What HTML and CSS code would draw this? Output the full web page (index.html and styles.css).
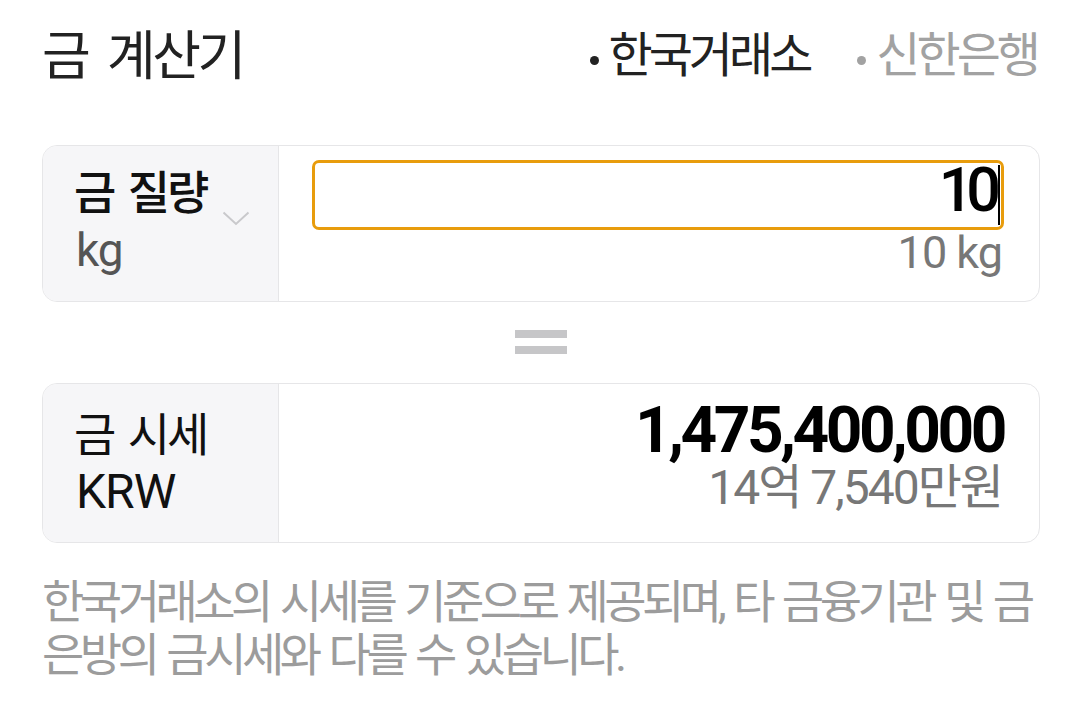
FILE: index.html
```html
<!DOCTYPE html>
<html lang="ko">

<head>
    <meta charset="UTF-8">
    <meta name="viewport" content="width=device-width, initial-scale=1.0">
    <title>금 계산기</title>
    <link rel="stylesheet" href="styles.css">
</head>

<body>

    <div class="page">
        <header class="top">
            <h1 class="title">금 계산기</h1>
            <nav class="tabs">
                <span class="tab tab-on"><i class="dot"></i>한국거래소</span>
                <span class="tab"><i class="dot"></i>신한은행</span>
            </nav>
        </header>

        <section class="card card-weight">
            <div class="card-label">
                <div class="label-row">
                    <span class="label-name">금 질량</span>
                    <svg class="chevron" width="28" height="15" viewBox="0 0 28 15">
                        <polyline points="1.5,1.5 14,13 26.5,1.5" fill="none" stroke="#c9c9cc" stroke-width="2" />
                    </svg>
                </div>
                <span class="label-unit">kg</span>
            </div>
            <div class="card-value">
                <div class="input-box">
                    <span class="input-text">10</span><span class="caret"></span>
                </div>
                <div class="sub">10 kg</div>
            </div>
        </section>

        <div class="equals"><span></span><span></span></div>

        <section class="card card-price">
            <div class="card-label">
                <span class="label-name name-light">금 시세</span>
                <span class="label-unit unit-dark">KRW</span>
            </div>
            <div class="card-value">
                <div class="amount">1,475,400,000</div>
                <div class="sub sub-price">14억 7,540만원</div>
            </div>
        </section>

        <p class="note">
            <span class="note-line">한국거래소의 시세를 기준으로 제공되며, 타 금융기관 및 금</span>
            <span class="note-line">은방의 금시세와 다를 수 있습니다.</span>
        </p>
    </div>

</body>

</html>
```

FILE: styles.css
```css
body {
    margin: 0;
    padding: 0;
    background: #ffffff;
    font-family: Roboto, "Noto Sans CJK KR", sans-serif;
    color: #111;
}

.page {
    width: 1080px;
    padding: 0 40px 0 42px;
    box-sizing: border-box;
}

/* header */
.top {
    height: 116px;
    display: flex;
    align-items: center;
    justify-content: space-between;
}

.title {
    margin: 0;
    font-size: 53px;
    font-weight: 400;
    letter-spacing: -3.5px;
    word-spacing: 10px;
    line-height: 1;
    color: #222;
    margin-top: -2px;
}

.tabs {
    display: flex;
    align-items: center;
    gap: 48px;
    margin-top: -4px;
    margin-right: 3px;
}

.tab {
    display: flex;
    align-items: center;
    font-size: 48px;
    letter-spacing: -4px;
    line-height: 1;
    color: #a2a2a2;
}

.tab-on {
    color: #222;
}

.dot {
    width: 9px;
    height: 9px;
    border-radius: 50%;
    background: currentColor;
    margin: 9px 10px 0 0;
}

/* cards */
.card {
    display: flex;
    border: 1px solid #e6e6e8;
    border-radius: 15px;
    overflow: hidden;
    box-sizing: border-box;
}

.card-weight {
    margin-top: 29px;
    height: 157px;
}

.card-price {
    height: 160px;
}

.card-label {
    width: 236px;
    flex-shrink: 0;
    background: #f6f6f8;
    border-right: 1px solid #e6e6e8;
    box-sizing: border-box;
    padding-left: 31px;
    display: flex;
    flex-direction: column;
    justify-content: center;
}

.label-row {
    display: flex;
    align-items: flex-end;
}

.label-name {
    font-size: 46px;
    font-weight: 500;
    letter-spacing: -3px;
    word-spacing: 6px;
    line-height: 58px;
    color: #111;
    margin-top: -6px;
}

.name-light {
    font-weight: 400;
    margin-top: 0;
}

.chevron {
    margin: 0 0 -4px 16px;
}

.label-unit {
    font-size: 46px;
    line-height: 56px;
    color: #555;
    letter-spacing: -1px;
    padding-left: 2px;
}

.unit-dark {
    color: #111;
    font-size: 48px;
}

.card-value {
    flex: 1;
    display: flex;
    flex-direction: column;
    align-items: flex-end;
    justify-content: flex-start;
    padding: 19px 35px 0 33px;
}

.card-weight .card-value {
    padding-top: 14px;
}

.input-box {
    width: 100%;
    height: 70px;
    box-sizing: border-box;
    border: 3px solid #e89c0c;
    border-radius: 7px;
    display: flex;
    align-items: center;
    justify-content: flex-end;
    padding-right: 1px;
}

.input-text {
    font-size: 61px;
    font-weight: 500;
    letter-spacing: -7px;
    line-height: 1;
    color: #000;
    margin-top: -10px;
}

.caret {
    width: 2px;
    height: 60px;
    background: #000;
    margin-left: 4px;
}

.sub {
    font-size: 45px;
    line-height: 1;
    letter-spacing: -1px;
    color: #777;
    margin: 0 2px 0 0;
}

.amount {
    font-size: 64px;
    font-weight: 700;
    letter-spacing: -3.5px;
    line-height: 56px;
    color: #000;
}

.sub-price {
    font-size: 48px;
    line-height: 48px;
    letter-spacing: -2px;
    margin-top: 5px;
}

/* equals sign */
.equals {
    display: flex;
    flex-direction: column;
    align-items: center;
    gap: 8px;
    padding: 28px 0 29px;
}

.equals span {
    width: 52px;
    height: 8px;
    background: #c6c6c8;
}

/* footnote */
.note {
    margin: 33px 0 0 0;
    font-size: 46px;
    line-height: 53px;
    letter-spacing: -4.5px;
    word-spacing: 4px;
    color: #9c9c9c;
}

.note-line {
    display: block;
    white-space: nowrap;
}
```
